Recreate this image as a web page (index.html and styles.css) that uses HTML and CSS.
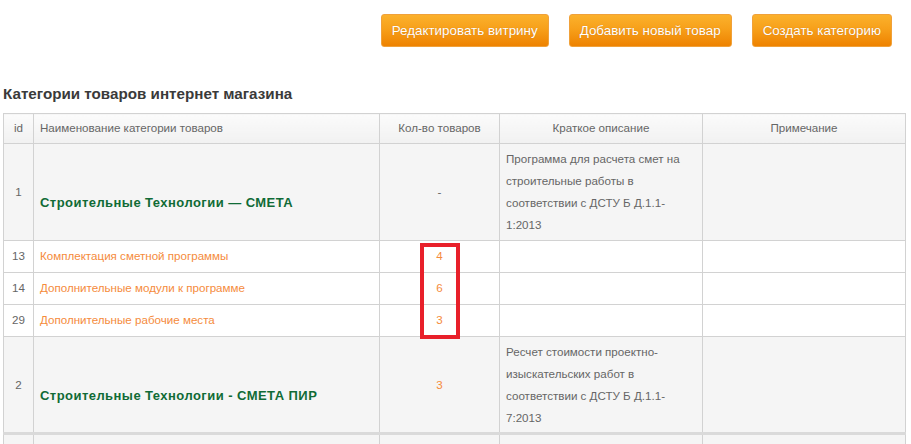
FILE: index.html
```html
<!DOCTYPE html>
<html lang="ru">
<head>
<meta charset="utf-8">
<title>Категории товаров</title>
<link rel="stylesheet" href="styles.css">
</head>
<body>
<div class="page">
  <div class="toolbar">
    <a class="btn" href="#">Редактировать витрину</a>
    <a class="btn" href="#">Добавить новый товар</a>
    <a class="btn" href="#">Создать категорию</a>
  </div>
  <h2 class="title">Категории товаров интернет магазина</h2>
  <table class="cats">
    <colgroup>
      <col class="c-id"><col class="c-name"><col class="c-count"><col class="c-desc"><col class="c-note">
    </colgroup>
    <thead>
      <tr>
        <th class="center">id</th>
        <th class="left">Наименование категории товаров</th>
        <th class="center">Кол-во товаров</th>
        <th class="center">Краткое описание</th>
        <th class="center">Примечание</th>
      </tr>
    </thead>
    <tbody>
      <tr class="cat">
        <td class="center">1</td>
        <td><span class="cat-name">Строительные Технологии — СМЕТА</span></td>
        <td class="center">-</td>
        <td class="desc">Программа для расчета смет на строительные работы в соответствии с ДСТУ Б Д.1.1-1:2013</td>
        <td></td>
      </tr>
      <tr class="sub">
        <td class="center">13</td>
        <td><a class="link" href="#">Комплектация сметной программы</a></td>
        <td class="center"><a class="link" href="#">4</a></td>
        <td></td>
        <td></td>
      </tr>
      <tr class="sub">
        <td class="center">14</td>
        <td><a class="link" href="#">Дополнительные модули к программе</a></td>
        <td class="center"><a class="link" href="#">6</a></td>
        <td></td>
        <td></td>
      </tr>
      <tr class="sub">
        <td class="center">29</td>
        <td><a class="link" href="#">Дополнительные рабочие места</a></td>
        <td class="center"><a class="link" href="#">3</a></td>
        <td></td>
        <td></td>
      </tr>
      <tr class="cat cat-last">
        <td class="center">2</td>
        <td><span class="cat-name">Строительные Технологии - СМЕТА ПИР</span></td>
        <td class="center"><a class="link" href="#">3</a></td>
        <td class="desc">Ресчет стоимости проектно-изыскательских работ в соответствии с ДСТУ Б Д.1.1-7:2013</td>
        <td></td>
      </tr>
      <tr class="cat tail">
        <td></td>
        <td></td>
        <td></td>
        <td class="desc">Экспертиза</td>
        <td></td>
      </tr>
    </tbody>
  </table>
  <div class="highlight"></div>
</div>
</body>
</html>
```

FILE: styles.css
```css
html, body {
  margin: 0;
  padding: 0;
  background: #ffffff;
  overflow: hidden;
}
body {
  font-family: "Liberation Sans", Arial, sans-serif;
  color: #666666;
}
.page {
  position: relative;
  height: 444px;
  overflow: hidden;
  padding: 14px 6px 0 3px;
  box-sizing: border-box;
}
.toolbar {
  display: flex;
  justify-content: flex-end;
  gap: 20px;
  padding-right: 13px;
}
.btn {
  display: block;
  height: 31px;
  line-height: 31px;
  padding: 0 10px;
  font-size: 13.4px;
  color: #fff;
  text-decoration: none;
  background: linear-gradient(to bottom, #fbb12c 0%, #f7a01a 45%, #ee8200 100%);
  border: 1px solid #f0a13a;
  border-radius: 3px;
  text-shadow: 0 0 1px rgba(150, 70, 0, 0.45);
}
.title {
  margin: 38px 0 0 0;
  font-size: 15.2px;
  font-weight: bold;
  color: #3a3a3a;
  line-height: 18px;
}
.cats {
  margin-top: 10px;
  width: 902px;
  border-collapse: collapse;
  table-layout: fixed;
  font-size: 11.6px;
  border: 1px solid #d2d2d2;
}
.c-id { width: 30px; }
.c-name { width: 346px; }
.c-count { width: 120px; }
.c-desc { width: 203px; }
.c-note { width: 203px; }
.cats th, .cats td {
  border: 1px solid #d2d2d2;
  padding: 3px 6px 4px;
  line-height: 22px;
  vertical-align: middle;
}
.cats th {
  font-weight: normal;
  color: #666;
  background: linear-gradient(to bottom, #fbfbfb, #f1f1f1);
}
.cats td.center, .cats th.center { text-align: center; padding-left: 2px; padding-right: 2px; }
.cats th.left { text-align: left; }
.cats td { color: #666; }
.cat td { background: #f5f5f5; }
.cat-name {
  display: inline-block;
  padding-top: 23px;
  font-size: 13px;
  font-weight: bold;
  color: #106b36;
  letter-spacing: 0.45px;
}
.desc { vertical-align: top !important; padding-top: 4px !important; }
.sub td { background: #fff; padding: 4px 6px 5px; }
.cat-last td { border-bottom: 3px solid #dadada; padding-bottom: 3px; }
.tail td { height: 40px; }
.link {
  color: #f58b3c;
  text-decoration: none;
}
.highlight {
  position: absolute;
  left: 420px;
  top: 243px;
  width: 32px;
  height: 88px;
  border: 4px solid #e8202a;
}
```
